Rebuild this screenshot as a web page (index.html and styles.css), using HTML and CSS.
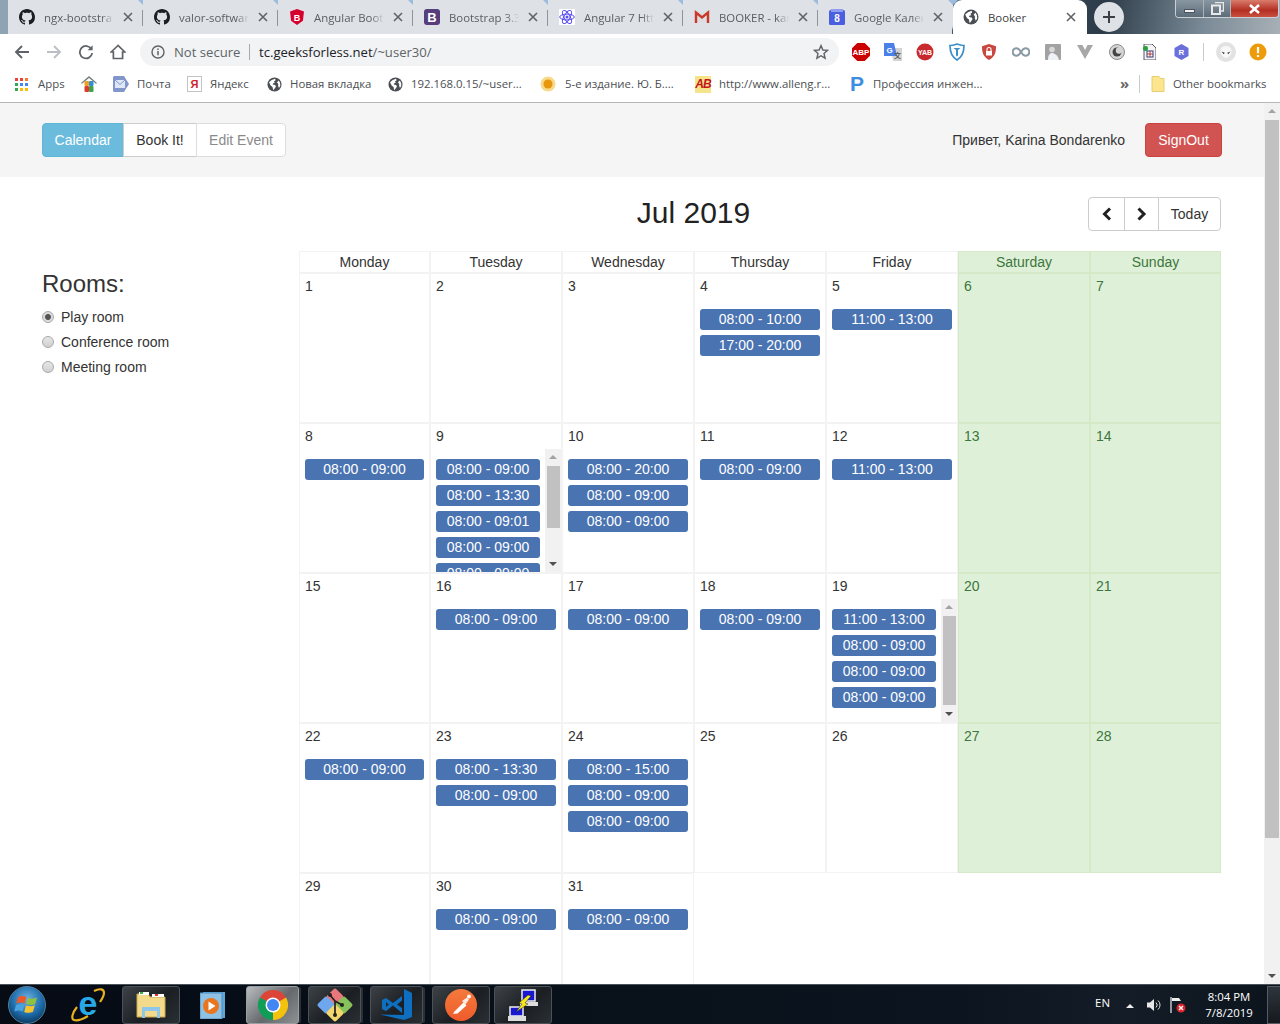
FILE: index.html
```html
<!DOCTYPE html>
<html lang="en">
<head>
<meta charset="utf-8">
<title>Booker</title>
<link rel="stylesheet" href="styles.css">
</head>
<body>
<svg class="defs" width="0" height="0" aria-hidden="true">
  <symbol id="gh" viewBox="0 0 16 16"><path fill="#1b1f23" d="M8 0C3.58 0 0 3.58 0 8c0 3.54 2.29 6.53 5.47 7.59.4.07.55-.17.55-.38 0-.19-.01-.82-.01-1.49-2.01.37-2.53-.49-2.69-.94-.09-.23-.48-.94-.82-1.13-.28-.15-.68-.52-.01-.53.63-.01 1.08.58 1.23.82.72 1.21 1.87.87 2.33.66.07-.52.28-.87.51-1.07-1.78-.2-3.64-.89-3.64-3.95 0-.87.31-1.59.82-2.15-.08-.2-.36-1.02.08-2.12 0 0 .67-.21 2.2.82.64-.18 1.32-.27 2-.27.68 0 1.36.09 2 .27 1.53-1.04 2.2-.82 2.2-.82.44 1.1.16 1.92.08 2.12.51.56.82 1.27.82 2.15 0 3.07-1.87 3.75-3.65 3.95.29.25.54.73.54 1.48 0 1.07-.01 1.93-.01 2.2 0 .21.15.46.55.38A8.013 8.013 0 0016 8c0-4.42-3.58-8-8-8z"/></symbol>
  <symbol id="globe" viewBox="0 0 16 16"><circle cx="8" cy="8" r="7.5" fill="#4b4f54"/><path fill="#fff" d="M2.2 5.5 5 3.2l3.6-1.4.6 1.6-1.8 1.3 1 1.5-1.8.4-.6 1.4 2.6.5 1 1.6-1.6 2.3-1.4 1.6-.7-3.4-2-1.6zM10.6 5.6l2-1.8 1.4 2.6.2 3-1.4 2.4-1-2.6.2-1.8z"/></symbol>
  <symbol id="x" viewBox="0 0 10 10"><path d="M1 1l8 8M9 1l-8 8" stroke="#5f6368" stroke-width="1.6" fill="none"/></symbol>
</svg>

<header class="chrome">
  <div class="tabstrip">
    <div class="tab"><svg class="tab-ico"><use href="#gh"/></svg><span class="tab-text">ngx-bootstra</span><svg class="tab-x"><use href="#x"/></svg></div>
    <div class="tab"><svg class="tab-ico"><use href="#gh"/></svg><span class="tab-text">valor-softwar</span><svg class="tab-x"><use href="#x"/></svg></div>
    <div class="tab"><svg class="tab-ico" viewBox="0 0 16 16"><path fill="#d6002f" d="M8 0l7 2.4-1.1 9.4L8 16l-5.900-4.200L1 2.400z"/><text x="8" y="11.500" text-anchor="middle" class="svg-b9">B</text></svg><span class="tab-text">Angular Boot</span><svg class="tab-x"><use href="#x"/></svg></div>
    <div class="tab"><svg class="tab-ico" viewBox="0 0 16 16"><rect width="16" height="16" rx="3" fill="#563d7c"/><text x="8" y="12.500" text-anchor="middle" class="svg-b12">B</text></svg><span class="tab-text">Bootstrap 3.3</span><svg class="tab-x"><use href="#x"/></svg></div>
    <div class="tab"><svg class="tab-ico" viewBox="0 0 16 16"><rect width="16" height="16" fill="#fff"/><g fill="none" stroke="#5a4ff0" stroke-width="1"><ellipse cx="8" cy="8" rx="7.300" ry="2.900"/><ellipse cx="8" cy="8" rx="7.300" ry="2.900" transform="rotate(60 8 8)"/><ellipse cx="8" cy="8" rx="7.300" ry="2.900" transform="rotate(120 8 8)"/></g><circle cx="8" cy="8" r="1.500" fill="#5a4ff0"/></svg><span class="tab-text">Angular 7 Htt</span><svg class="tab-x"><use href="#x"/></svg></div>
    <div class="tab"><svg class="tab-ico" viewBox="0 0 16 16"><path fill="#d9d9d9" d="M2 3h12v10H2z" opacity=".35"/><path d="M2 14V3.500l6 5 6-5V14" fill="none" stroke="#c9382b" stroke-width="2.400"/></svg><span class="tab-text">BOOKER - kar</span><svg class="tab-x"><use href="#x"/></svg></div>
    <div class="tab tab-before-active"><svg class="tab-ico" viewBox="0 0 16 16"><rect y="1" width="16" height="15" rx="1.500" fill="#4a5ee0"/><rect x="2" width="12" height="3" fill="#8f9cf0"/><text x="8" y="13" text-anchor="middle" class="svg-b10">8</text></svg><span class="tab-text">Google Кален</span><svg class="tab-x"><use href="#x"/></svg></div>
    <div class="tab tab-active"><svg class="tab-ico"><use href="#globe"/></svg><span class="tab-text">Booker</span><svg class="tab-x"><use href="#x"/></svg></div>
    <div class="newtab"><svg width="14" height="14" viewBox="0 0 14 14"><path d="M7 1v12M1 7h12" stroke="#3c4043" stroke-width="2"/></svg></div>
    <div class="winctl">
      <span class="wc wc-min"><i class="wc-dash"></i></span>
      <span class="wc wc-max"><svg width="13" height="13" viewBox="0 0 13 13"><path d="M4 .5h8.500V9H9" fill="none" stroke="#e8e8e8" stroke-width="1.500"/><rect x="1" y="3.500" width="8" height="8.500" fill="none" stroke="#e8e8e8" stroke-width="2"/></svg></span>
      <span class="wc wc-close"><svg width="13" height="10" viewBox="0 0 13 10"><path d="M2 1l9 8M11 1l-9 8" stroke="#fff" stroke-width="2.600"/></svg></span>
    </div>
  </div>

  <div class="toolbar">
    <span class="tb"><svg width="16" height="16" viewBox="0 0 16 16"><path d="M15 8H2M8 2L2 8l6 6" fill="none" stroke="#5f6368" stroke-width="1.900"/></svg></span>
    <span class="tb"><svg width="16" height="16" viewBox="0 0 16 16"><path d="M1 8h13M8 2l6 6-6 6" fill="none" stroke="#bcc0c4" stroke-width="1.900"/></svg></span>
    <span class="tb"><svg width="16" height="16" viewBox="0 0 16 16"><path d="M13.500 5.200A6.200 6.200 0 1 0 14.200 9" fill="none" stroke="#5f6368" stroke-width="1.800"/><path d="M14.600 1.200v5h-5z" fill="#5f6368"/></svg></span>
    <span class="tb"><svg width="16" height="16" viewBox="0 0 16 16"><path d="M8 1.500L1.200 8H3.400v6.500h9.200V8h2.200z" fill="none" stroke="#5f6368" stroke-width="1.700"/></svg></span>
    <div class="omnibox">
      <svg class="omni-info" width="14" height="14" viewBox="0 0 14 14"><circle cx="7" cy="7" r="6" fill="none" stroke="#5f6368" stroke-width="1.400"/><path d="M7 6v4.200M7 3.400v1.600" stroke="#5f6368" stroke-width="1.500"/></svg>
      <span class="omni-ns">Not secure</span>
      <span class="omni-host">tc.geeksforless.net</span><span class="omni-path">/~user30/</span>
      <svg class="omni-star" width="16" height="16" viewBox="0 0 16 16"><path d="M8 1.600l1.900 4.400 4.700.4-3.600 3.100 1.100 4.700L8 11.700l-4.100 2.500L5 9.500 1.400 6.400l4.700-.4z" fill="none" stroke="#5f6368" stroke-width="1.400"/></svg>
    </div>
    <div class="exts">
      <span class="ext"><svg width="18" height="18" viewBox="0 0 18 18"><path fill="#c00" d="M5.300 0h7.400L18 5.300v7.400L12.700 18H5.300L0 12.700V5.300z"/><text x="9" y="12" text-anchor="middle" class="svg-b8n">ABP</text></svg></span>
      <span class="ext"><svg width="18" height="18" viewBox="0 0 18 18"><path fill="#d4d4d4" d="M7 5h11v13H9z"/><path fill="#4a80e8" d="M0 0h10l3 13H0z"/><text x="5.500" y="10" text-anchor="middle" class="svg-b8">G</text><text x="13.500" y="15" text-anchor="middle" class="svg-g7">文</text></svg></span>
      <span class="ext"><svg width="18" height="18" viewBox="0 0 18 18"><circle cx="9" cy="9" r="8.500" fill="#c9282d"/><text x="9" y="11.500" text-anchor="middle" class="svg-b7">YAB</text></svg></span>
      <span class="ext"><svg width="16" height="18" viewBox="0 0 16 18"><path d="M1 2.500c4 0 5-1 7-1.500 2 .5 3 1.500 7 1.500 0 6-1 11-7 14.500C2 13.500 1 8.500 1 2.500z" fill="#fff" stroke="#3d8fcb" stroke-width="1.700"/><path d="M4.500 5h7l-2.500 2v5.500l-1 1-1-1V7z" fill="#3d8fcb"/></svg></span>
      <span class="ext"><svg width="14" height="16" viewBox="0 0 14 16"><path d="M7 0l7 2.200c0 6-1 10.500-7 13.800C1 12.700 0 8.200 0 2.200z" fill="#c9473f"/><rect x="4" y="7" width="6" height="4.500" fill="#fff"/><path d="M5 7V5.500a2 2 0 0 1 4 0V7" fill="none" stroke="#fff" stroke-width="1.100"/></svg></span>
      <span class="ext"><svg width="18" height="10" viewBox="0 0 18 10"><path d="M9 5C7.500 2.500 6 1.200 4.500 1.200a3.800 3.800 0 0 0 0 7.600C6 8.800 7.500 7.500 9 5c1.500-2.500 3-3.800 4.500-3.800a3.800 3.800 0 0 1 0 7.600C12 8.800 10.500 7.500 9 5z" fill="none" stroke="#8a9aa5" stroke-width="2"/></svg></span>
      <span class="ext"><svg width="16" height="16" viewBox="0 0 16 16"><rect width="16" height="16" rx="1" fill="#a2a2a2"/><circle cx="7" cy="5.500" r="2.800" fill="#d8d8d8"/><path d="M3 16c0-5 2-7 4-7s6 2 7 7z" fill="#eef1f6"/></svg></span>
      <span class="ext"><svg width="16" height="14" viewBox="0 0 16 14"><path d="M0 0h5.500L8 5l2.500-5H16L8 14z" fill="#a7a7a7"/></svg></span>
      <span class="ext"><svg width="16" height="16" viewBox="0 0 16 16"><circle cx="8" cy="8" r="7.500" fill="#d5d5d5" stroke="#8a8a8a"/><circle cx="8" cy="8" r="4.500" fill="#444"/><circle cx="10" cy="6.500" r="3.200" fill="#d5d5d5"/></svg></span>
      <span class="ext"><svg width="14" height="16" viewBox="0 0 14 16"><path d="M2 0h8l4 4v12H2z" fill="#f4f4f4" stroke="#556" stroke-width="1"/><rect x="5" y="7" width="6" height="6" fill="#fff" stroke="#2b3f7a"/><path d="M8 7v6M5 10h6" stroke="#b33"/><rect x="1" y="2" width="5" height="5" rx="2" fill="#2ea043"/></svg></span>
      <span class="ext"><svg width="15" height="16" viewBox="0 0 15 16"><path d="M7.500 0l7 4v8l-7 4-7-4V4z" fill="#6a6fdc"/><text x="7.500" y="11" text-anchor="middle" class="svg-b8">R</text></svg></span>
    </div>
    <span class="tb-sep"></span>
    <span class="ext"><svg width="20" height="20" viewBox="0 0 20 20"><circle cx="10" cy="10" r="10" fill="#e2e2e2"/><path d="M10 4c4 0 5.500 3 5.500 5 0 4-3.500 7-5.500 7s-5.500-3-5.500-7c0-2 1.500-5 5.500-5z" fill="#f8f8f8"/><path d="M5.500 9.500l3.200 1.300-.9 1.500zM14.500 9.500l-3.200 1.300.9 1.500z" fill="#333"/></svg></span>
    <span class="ext"><svg width="18" height="18" viewBox="0 0 18 18"><circle cx="9" cy="9" r="8.500" fill="#ee9b0b"/><path d="M9 4v6.200M9 12v2" stroke="#fff" stroke-width="2.200"/></svg></span>
  </div>

  <nav class="bookmarks">
    <a class="bm"><svg width="13" height="13" viewBox="0 0 13 13"><rect width="3" height="3" fill="#ea4335"/><rect x="5" width="3" height="3" fill="#ea4335"/><rect x="10" width="3" height="3" fill="#f4792b"/><rect y="5" width="3" height="3" fill="#34a853"/><rect x="5" y="5" width="3" height="3" fill="#4285f4"/><rect x="10" y="5" width="3" height="3" fill="#4285f4"/><rect y="10" width="3" height="3" fill="#34a853"/><rect x="5" y="10" width="3" height="3" fill="#fbbc05"/><rect x="10" y="10" width="3" height="3" fill="#fbbc05"/></svg><span class="bm-apps">Apps</span></a>
    <a class="bm"><svg width="16" height="16" viewBox="0 0 16 16"><path d="M8 0L0 7l1 .8L8 2l7 5.800L16 7z" fill="#77807a"/><rect x="3.500" y="5" width="4.500" height="5" rx="1" fill="#f0a020"/><rect x="8" y="5" width="4.500" height="5" rx="1" fill="#2f8fd1"/><rect x="3.500" y="10" width="4.500" height="6" rx="1" fill="#e0392b"/><rect x="8" y="10" width="4.500" height="6" rx="1" fill="#3fa34d"/></svg></a>
    <a class="bm"><svg width="16" height="16" viewBox="0 0 16 16"><path d="M1.500 0H11l5 8-5 8H1.500A1.500 1.500 0 0 1 0 14.500v-13A1.500 1.500 0 0 1 1.500 0z" fill="#8296cc"/><rect x="2" y="4" width="10" height="8" fill="#dfe7f6"/><path d="M2 4l5 4.500L12 4" fill="none" stroke="#8296cc"/></svg><span class="bm-t">Почта</span></a>
    <a class="bm"><span class="ico-ya">Я</span><span class="bm-t">Яндекс</span></a>
    <a class="bm"><svg width="15" height="15"><use href="#globe"/></svg><span class="bm-t bm-g">Новая вкладка</span></a>
    <a class="bm"><svg width="15" height="15"><use href="#globe"/></svg><span class="bm-t">192.168.0.15/~user...</span></a>
    <a class="bm"><svg width="16" height="16" viewBox="0 0 16 16"><circle cx="8" cy="8" r="7.500" fill="#f7d98a"/><circle cx="8" cy="8" r="4.500" fill="#e7960e"/></svg><span class="bm-t bm-s">5-е издание. Ю. Б....</span></a>
    <a class="bm"><span class="ico-ab">AB</span><span class="bm-t">http://www.alleng.r...</span></a>
    <a class="bm"><span class="ico-p">P</span><span class="bm-t">Профессия инжен...</span></a>
    <span class="bm-more">»</span>
    <span class="bm-sep"></span>
    <a class="bm"><svg width="14" height="16" viewBox="0 0 14 16"><path d="M1 .5h7l1.500 2H13v13H1z" fill="#fbe58f" stroke="#e7cf6f"/></svg><span class="bm-t">Other bookmarks</span></a>
  </nav>
</header>

<div class="viewport">
  <main class="page">
    <section class="topbar">
      <div class="btn-group">
        <button class="btn btn-info">Calendar</button>
        <button class="btn btn-book">Book It!</button>
        <button class="btn btn-disabled">Edit Event</button>
      </div>
      <div class="user">
        <span>Привет, Karina Bondarenko</span>
        <button class="btn btn-danger">SignOut</button>
      </div>
    </section>

    <section class="content">
      <aside class="rooms">
        <h2 class="rooms-title">Rooms:</h2>
        <label class="room"><span class="radio radio-on"></span>Play room</label>
        <label class="room"><span class="radio"></span>Conference room</label>
        <label class="room"><span class="radio"></span>Meeting room</label>
      </aside>

      <div class="calendar">
        <div class="cal-head">
          <h1 class="cal-title">Jul 2019</h1>
          <div class="btn-group">
            <button class="btn btn-nav"><svg width="12" height="14" viewBox="0 0 12 14"><path d="M9 1.500L3.500 7 9 12.500" fill="none" stroke="#222" stroke-width="3"/></svg></button>
            <button class="btn btn-nav"><svg width="12" height="14" viewBox="0 0 12 14"><path d="M2.500 1.500L8 7l-5.500 5.500" fill="none" stroke="#222" stroke-width="3"/></svg></button>
            <button class="btn btn-today">Today</button>
          </div>
        </div>

        <div class="grid">
          <div class="dow">Monday</div><div class="dow">Tuesday</div><div class="dow">Wednesday</div><div class="dow">Thursday</div><div class="dow">Friday</div><div class="dow we">Saturday</div><div class="dow we">Sunday</div>

          <div class="day"><div class="num">1</div></div>
          <div class="day"><div class="num">2</div></div>
          <div class="day"><div class="num">3</div></div>
          <div class="day"><div class="num">4</div><div class="events"><div class="ev-list"><div class="ev">08:00 - 10:00</div><div class="ev">17:00 - 20:00</div></div></div></div>
          <div class="day"><div class="num">5</div><div class="events"><div class="ev-list"><div class="ev">11:00 - 13:00</div></div></div></div>
          <div class="day we"><div class="num">6</div></div>
          <div class="day we"><div class="num">7</div></div>

          <div class="day"><div class="num">8</div><div class="events"><div class="ev-list"><div class="ev">08:00 - 09:00</div></div></div></div>
          <div class="day"><div class="num">9</div><div class="events"><div class="ev-list ev-scroll"><div class="ev">08:00 - 09:00</div><div class="ev">08:00 - 13:30</div><div class="ev">08:00 - 09:01</div><div class="ev">08:00 - 09:00</div><div class="ev">08:00 - 09:00</div></div><div class="sb"><i class="sb-up"></i><b class="sb-thumb sb-t1"></b><i class="sb-down"></i></div></div></div>
          <div class="day"><div class="num">10</div><div class="events"><div class="ev-list"><div class="ev">08:00 - 20:00</div><div class="ev">08:00 - 09:00</div><div class="ev">08:00 - 09:00</div></div></div></div>
          <div class="day"><div class="num">11</div><div class="events"><div class="ev-list"><div class="ev">08:00 - 09:00</div></div></div></div>
          <div class="day"><div class="num">12</div><div class="events"><div class="ev-list"><div class="ev">11:00 - 13:00</div></div></div></div>
          <div class="day we"><div class="num">13</div></div>
          <div class="day we"><div class="num">14</div></div>

          <div class="day"><div class="num">15</div></div>
          <div class="day"><div class="num">16</div><div class="events"><div class="ev-list"><div class="ev">08:00 - 09:00</div></div></div></div>
          <div class="day"><div class="num">17</div><div class="events"><div class="ev-list"><div class="ev">08:00 - 09:00</div></div></div></div>
          <div class="day"><div class="num">18</div><div class="events"><div class="ev-list"><div class="ev">08:00 - 09:00</div></div></div></div>
          <div class="day"><div class="num">19</div><div class="events"><div class="ev-list ev-scroll"><div class="ev">11:00 - 13:00</div><div class="ev">08:00 - 09:00</div><div class="ev">08:00 - 09:00</div><div class="ev">08:00 - 09:00</div></div><div class="sb"><i class="sb-up"></i><b class="sb-thumb sb-t2"></b><i class="sb-down"></i></div></div></div>
          <div class="day we"><div class="num">20</div></div>
          <div class="day we"><div class="num">21</div></div>

          <div class="day"><div class="num">22</div><div class="events"><div class="ev-list"><div class="ev">08:00 - 09:00</div></div></div></div>
          <div class="day"><div class="num">23</div><div class="events"><div class="ev-list"><div class="ev">08:00 - 13:30</div><div class="ev">08:00 - 09:00</div></div></div></div>
          <div class="day"><div class="num">24</div><div class="events"><div class="ev-list"><div class="ev">08:00 - 15:00</div><div class="ev">08:00 - 09:00</div><div class="ev">08:00 - 09:00</div></div></div></div>
          <div class="day"><div class="num">25</div></div>
          <div class="day"><div class="num">26</div></div>
          <div class="day we"><div class="num">27</div></div>
          <div class="day we"><div class="num">28</div></div>

          <div class="day"><div class="num">29</div></div>
          <div class="day"><div class="num">30</div><div class="events"><div class="ev-list"><div class="ev">08:00 - 09:00</div></div></div></div>
          <div class="day"><div class="num">31</div><div class="events"><div class="ev-list"><div class="ev">08:00 - 09:00</div></div></div></div>
        </div>
      </div>
    </section>
  </main>
  <div class="page-sb"><i class="sb-up"></i><b class="page-thumb"></b><i class="sb-down"></i></div>
</div>

<footer class="taskbar">
  <span class="orb"><svg width="46" height="38" viewBox="0 1 46 38"><defs><radialGradient id="orbg" cx=".5" cy=".35" r=".7"><stop offset="0" stop-color="#6fb4e4"/><stop offset=".6" stop-color="#1c6aa8"/><stop offset="1" stop-color="#0a2f50"/></radialGradient></defs><circle cx="23" cy="20" r="18.500" fill="url(#orbg)" stroke="#4f7f9f"/><path d="M14 12c3-1.500 6-1 8.500.2l-1.800 6.300c-2.500-1-5-1.500-8.500 0z" fill="#e8592b"/><path d="M24 12.800c3 1.200 6 1.200 9-.2l-1.800 6.300c-3 1.400-6 1.200-9 .2z" fill="#8fc23f"/><path d="M12 20c3-1.500 6-1 8.300 0L18.600 26.500c-2.500-1-5-1.500-8.400 0z" fill="#4aa3df"/><path d="M22 20.500c3 1 6 1 8.800-.2L29 26.800c-3 1.400-6 1.200-8.800.1z" fill="#f4c430"/></svg></span>
  <span class="tk tk-plain tk-ie"><svg width="38" height="38" viewBox="0 0 38 38"><path d="M25 5c6-3 10-2 10 2 0 3-2 6-4 9M8 21C3 27 2 33 5 34c3 1 9-1 14-4" fill="none" stroke="#e8b020" stroke-width="2.200"/><text x="19" y="29" text-anchor="middle" class="svg-ie">e</text></svg></span>
  <span class="tk tk-btn tk-folder"><svg width="32" height="32" viewBox="0 0 32 32"><path d="M2 5h11l2 3h15v20H2z" fill="#f3d98a" stroke="#c9a94f"/><rect x="4" y="3" width="10" height="3" fill="#fff"/><rect x="5" y="3" width="3" height="2" fill="#3cb043"/><rect x="17" y="5" width="12" height="3" fill="#fff"/><rect x="20" y="5" width="3" height="2" fill="#d33"/><path d="M7 18h18v11h-3v-7H10v7H7z" fill="#8fc7ea"/></svg></span>
  <span class="tk tk-plain tk-media"><svg width="26" height="28" viewBox="0 0 26 28"><rect x="3" y="1" width="22" height="26" fill="#5fa7d9"/><rect y="2" width="22" height="26" fill="#8ec1e4" stroke="#4e8fc0"/><circle cx="11" cy="15" r="8" fill="#e9761e"/><path d="M8.500 10.500v9l7-4.500z" fill="#fff"/></svg></span>
  <span class="tk tk-btn tk-active"><svg width="30" height="30" viewBox="0 0 30 30"><path d="M2 7.500A15 15 0 0 1 28 7.500L15 15z" fill="#db4437"/><path d="M28 7.500A15 15 0 0 1 15 30V15z" fill="#f4c20d"/><path d="M15 30A15 15 0 0 1 2 7.500L15 15z" fill="#0f9d58"/><circle cx="15" cy="15" r="7.500" fill="#fff"/><circle cx="15" cy="15" r="6" fill="#4285f4"/></svg></span>
  <span class="tk tk-btn tk-git"><svg width="36" height="36" viewBox="0 0 36 36"><rect x="11.500" y="3.500" width="13" height="13" rx="2" transform="rotate(45 18 10)" fill="#e8787c"/><rect x="2.500" y="11.500" width="13" height="13" rx="2" transform="rotate(45 9 18)" fill="#6ea7ee"/><rect x="20.500" y="11.500" width="13" height="13" rx="2" transform="rotate(45 27 18)" fill="#86c15a"/><rect x="11.500" y="19.500" width="13" height="13" rx="2" transform="rotate(45 18 26)" fill="#f3d66c"/><path d="M12 7l6 7v14M18 14l7 4" stroke="#222" stroke-width="1.700" fill="none"/><circle cx="18" cy="28" r="2" fill="#222"/><circle cx="13" cy="8" r="2" fill="#222"/><circle cx="25" cy="18" r="2" fill="#222"/></svg></span>
  <span class="tk tk-btn"><svg width="33" height="32" viewBox="0 0 33 32"><path d="M24 0l8 4v24l-8 3L0 25.500l24 .5z" fill="#0e6fc0"/><path fill-rule="evenodd" d="M22 7l-9 7-7-5-4 2v9l4 2 7-5.500 9 7.500v-5l-5-3.500 5-4zM6 13l3 2.500L6 18z" fill="#0e6fc0"/></svg></span>
  <span class="tk tk-btn tk-postman"><svg width="32" height="32" viewBox="0 0 32 32"><defs><linearGradient id="pm" x1="0" y1="0" x2="0" y2="1"><stop offset="0" stop-color="#f47a3c"/><stop offset="1" stop-color="#ef5b2b"/></linearGradient></defs><circle cx="16" cy="16" r="16" fill="url(#pm)"/><path d="M8 25l1.500-2.500 9-9 3 3-9 8z" fill="#fff"/><path d="M17 12l5-3.500 2 2-3.500 5z" fill="#fff" opacity=".85"/><circle cx="24" cy="7.500" r="2" fill="#fff"/></svg></span>
  <span class="tk tk-btn tk-net"><svg width="32" height="32" viewBox="0 0 32 32"><rect x="15" y="1" width="13" height="11" fill="#1818d0" stroke="#eee" stroke-width="1.500"/><rect x="13" y="13" width="18" height="4" fill="#ddd"/><rect x="3" y="18" width="13" height="9" fill="#1818d0" stroke="#eee" stroke-width="1.500"/><rect x="1" y="27" width="18" height="5" fill="#ddd"/><path d="M21 6l-9 8 3 1-6 8 12-8-3-1 6-7z" fill="#f6e71a" stroke="#222" stroke-width=".5"/></svg></span>
  <div class="tray">
    <span class="tray-en">EN</span>
    <span class="tray-arrow"></span>
    <svg class="tray-ico" width="16" height="16" viewBox="0 0 16 16"><path d="M1 5.500h3L8 2v12l-4-3.500H1z" fill="#e8e8e8"/><path d="M10 5.500a3.500 3.500 0 0 1 0 5M12 3.500a6 6 0 0 1 0 9" fill="none" stroke="#d8d8d8" stroke-width="1"/></svg>
    <svg class="tray-ico tray-flag" width="16" height="16" viewBox="0 0 16 16"><path d="M1 0v16" stroke="#eee" stroke-width="1.200"/><path d="M2 1h7l2 3H2z" fill="#eee"/><circle cx="11" cy="11" r="4.500" fill="#d8232a"/><path d="M9 9l4 4M13 9l-4 4" stroke="#fff" stroke-width="1.300"/></svg>
    <div class="clock"><span>8:04 PM</span><span>7/8/2019</span></div>
    <span class="show-desktop"></span>
  </div>
</footer>
</body>
</html>
```

FILE: styles.css
```css
* { box-sizing: border-box; }
html, body { margin: 0; padding: 0; }
body {
  width: 1280px;
  height: 1024px;
  overflow: hidden;
  display: flex;
  flex-direction: column;
  font-family: "Liberation Sans", Arial, sans-serif;
  font-size: 14px;
  color: #333;
  background: #fff;
}
.defs { position: absolute; }

/* browser chrome */
.chrome {
  flex: none;
  height: 103px;
  border-bottom: 1px solid #b4b6b8;
  font-family: "Open Sans", "Noto Sans", sans-serif;
  font-size: 11.4px;
  color: #5a5e63;
}
.tabstrip {
  height: 34px;
  display: flex;
  padding-left: 8px;
  background: linear-gradient(90deg, #8ea3b4 0, #8ea3b4 9px, #dee1e6 9px, #dee1e6 952px, transparent 952px),
    linear-gradient(100deg, #44596d 75%, #2d3b49 86%, #7b8b97 94%, #a8b0b6 100%);
}
.tab {
  position: relative;
  width: 135px;
  height: 34px;
  flex: none;
  display: flex;
  align-items: center;
  padding-left: 11px;
  background: #dee1e6;
  font-size: 11.4px;
}
.tab::after {
  content: "";
  position: absolute;
  right: 0;
  top: 10px;
  width: 1px;
  height: 16px;
  background: #8f9296;
}
.tab::before {
  content: "";
  position: absolute;
  right: -5px;
  top: 0;
  border: 5px solid transparent;
  border-top-color: #9bbcdc;
  border-bottom: 0;
}
.tab-before-active { border-bottom-right-radius: 8px; }
.tab-before-active::after { display: none; }
.tab-ico { width: 16px; height: 16px; flex: none; }
.svg-b8 { font: 700 8px "Liberation Sans", sans-serif; fill: #fff; }
.svg-b9 { font: 700 9px "Liberation Sans", sans-serif; fill: #fff; }
.svg-b8n { font: 700 8px "Liberation Sans Narrow", "Liberation Sans", sans-serif; fill: #fff; }
.svg-b7 { font: 700 7px "Liberation Sans", sans-serif; fill: #fff; }
.svg-b10 { font: 700 10px "Liberation Sans", sans-serif; fill: #fff; }
.svg-b12 { font: 700 13px "Liberation Sans", sans-serif; fill: #fff; }
.svg-g7 { font: 700 7px "Noto Sans CJK SC", sans-serif; fill: #555; }
.svg-ie { font: 700 34px "Liberation Sans", sans-serif; fill: #27a9e8; }
.tab-text {
  margin-left: 9px;
  width: 70px;
  white-space: nowrap;
  flex: none;
  -webkit-mask-image: linear-gradient(90deg, #000 82%, transparent 100%);
  mask-image: linear-gradient(90deg, #000 82%, transparent 100%);
}
.tab-x { width: 10px; height: 10px; margin-left: 9px; flex: none; }
.tab-active {
  width: 134px;
  background: #fff;
  border-radius: 9px 9px 0 0;
  padding-left: 10px;
  color: #3c4043;
}
.tab-active::after, .tab-active::before { display: none; }
.tab-active .tab-text { width: 69px; -webkit-mask-image: none; mask-image: none; margin-left: 9px; }
.newtab {
  width: 30px;
  height: 30px;
  margin: 2px 0 0 7px;
  border-radius: 50%;
  background: #dee1e6;
  display: flex;
  align-items: center;
  justify-content: center;
  flex: none;
}
.winctl {
  margin-left: auto;
  margin-right: 1px;
  width: 104px;
  height: 18px;
  display: flex;
  border: 1px solid #c8d0d6;
  border-top: 0;
  border-radius: 0 0 4px 4px;
  overflow: hidden;
  flex: none;
}
.wc {
  display: flex;
  align-items: center;
  justify-content: center;
  border-right: 1px solid #aab2b8;
}
.wc-min { width: 28px; background: linear-gradient(#8997a3, #5d6c79); }
.wc-max { width: 27px; background: linear-gradient(#8997a3, #5d6c79); }
.wc-close { flex: 1; border-right: 0; background: linear-gradient(#d97c6c, #b32f22 60%, #c9503f); }
.wc-dash { width: 11px; height: 4px; margin-top: 4px; background: #f0f0f0; border: 1px solid #4a5560; }

.toolbar {
  height: 34px;
  margin-top: 1px;
  display: flex;
  align-items: center;
  padding-left: 6px;
  background: #fff;
}
.tb, .ext {
  width: 32px;
  height: 32px;
  flex: none;
  display: flex;
  align-items: center;
  justify-content: center;
}
.omnibox {
  width: 699px;
  height: 28px;
  margin: 0 6px;
  border-radius: 14px;
  background: #f1f3f4;
  display: flex;
  align-items: center;
  padding-left: 11px;
  font-size: 13.1px;
  flex: none;
}
.omni-info { flex: none; }
.omni-ns {
  margin-left: 9px;
  width: 76px;
  height: 16px;
  line-height: 16px;
  border-right: 1px solid #a7a9ac;
  color: #5f6368;
  flex: none;
}
.omni-host { margin-left: 9px; color: #202124; }
.omni-path { color: #5f6368; }
.omni-star { margin-left: auto; margin-right: 10px; flex: none; }
.exts { display: flex; flex: none; }
.tb-sep { width: 1px; height: 18px; margin: 0 6px; background: #c8cacc; flex: none; }

.bookmarks {
  height: 30px;
  display: grid;
  grid-template-columns: 66px 32px 74px 80px 121px 152px 155px 155px 270px 19px 12px auto;
  align-items: center;
  padding-left: 15px;
  background: #fff;
  color: #4c5054;
}
.bm { display: flex; align-items: center; gap: 8px; white-space: nowrap; }
.bm-t { padding-bottom: 2px; }
.bm-apps { margin-left: 2px; padding-bottom: 2px; }
.bm-g { margin-left: 0; }
.bm-s { margin-left: 1px; }
.ico-ya {
  width: 15px;
  height: 16px;
  border: 1px solid #c4c4c4;
  color: #d2232a;
  background: #fff;
  font: 700 11px/14px "Liberation Sans", sans-serif;
  text-align: center;
  flex: none;
}
.ico-ab {
  width: 16px;
  height: 17px;
  background: #f6e48a;
  color: #c4161c;
  font: italic 700 12px/17px "Liberation Sans", sans-serif;
  letter-spacing: -1px;
  text-align: center;
  flex: none;
}
.ico-p {
  width: 15px;
  color: #3d8ee0;
  font: 700 21px/16px "Liberation Sans", sans-serif;
  flex: none;
}
.bm-more { font-size: 15px; font-weight: 700; color: #666; padding-bottom: 2px; }
.bm-sep { width: 1px; height: 18px; background: #c8cacc; }

/* page */
.viewport {
  flex: 1;
  min-height: 0;
  display: flex;
  overflow: hidden;
}
.page {
  width: 1264px;
  flex: none;
  overflow: hidden;
  background: #fff;
}
.topbar {
  height: 74px;
  padding: 20px 42px;
  background: #f5f5f5;
  display: flex;
  justify-content: space-between;
  align-items: center;
}
.btn-group { display: flex; flex: none; }
.btn {
  height: 34px;
  padding: 0;
  margin-left: -1px;
  background: #fff;
  border: 1px solid #ccc;
  font: 14px "Liberation Sans", Arial, sans-serif;
  color: #333;
  display: flex;
  align-items: center;
  justify-content: center;
}
.btn-group .btn:first-child { margin-left: 0; border-radius: 4px 0 0 4px; }
.btn-group .btn:last-child { border-radius: 0 4px 4px 0; }
.btn-info { width: 82px; background: #6bbcdc; border-color: #5fb5d6; color: #fff; }
.btn-book { width: 74px; }
.btn-disabled { width: 90px; color: #8a8a8a; border-color: #ddd; }
.btn-danger { width: 77px; margin: 0; background: #d25452; border-color: #c9423e; color: #fff; border-radius: 4px; }
.user { display: flex; align-items: center; gap: 20px; }
.btn-nav { width: 35px; }
.btn-group .btn-nav:first-child { width: 37px; }
.btn-today { width: 63px; }

.content { display: flex; padding: 20px 43px 0 42px; }
.rooms { width: 257px; flex: none; padding-top: 74px; }
.rooms-title { margin: 0 0 7px; font-size: 24px; font-weight: 400; line-height: 26px; }
.room { display: flex; align-items: center; height: 25px; gap: 7px; color: #333; }
.radio {
  width: 12px;
  height: 12px;
  border-radius: 50%;
  border: 1px solid #a9a9a9;
  background: linear-gradient(#e6e6e6, #d0d0d0);
  flex: none;
}
.radio-on { background: radial-gradient(circle, #555 0 2.5px, #dcdcdc 3.5px); }

.calendar { width: 922px; flex: none; }
.cal-head { display: flex; align-items: center; height: 34px; margin-bottom: 20px; }
.cal-title {
  flex: 1;
  margin: 0;
  padding-bottom: 2px;
  text-align: center;
  font-size: 30px;
  font-weight: 400;
  line-height: 32px;
  color: #222;
}
.grid {
  display: grid;
  grid-template-columns: 131px 132px 132px 132px 132px 132px 131px;
  grid-template-rows: 22px;
  grid-auto-rows: 150px;
}
.dow {
  border: 1px solid #f3f3f3;
  text-align: center;
  line-height: 20px;
}
.day {
  border: 1px solid #f3f3f3;
  padding-top: 3px;
  display: flex;
  flex-direction: column;
  min-height: 0;
  overflow: hidden;
}
.we { background: #dff0d8; border-color: #d6e9c6; color: #3c763d; }
.num { height: 22px; line-height: 18px; padding-left: 5px; flex: none; }
.events { flex: 1; min-height: 0; display: flex; }
.ev-list { flex: 1; min-width: 0; padding: 10px 5px 0 5px; overflow: hidden; }
.ev {
  height: 21px;
  margin-bottom: 5px;
  border-radius: 3px;
  background: #4a73b2;
  color: #fff;
  line-height: 21px;
  text-align: center;
}

/* scrollbars */
.sb {
  width: 16px;
  flex: none;
  background: #f1f1f1;
  display: flex;
  flex-direction: column;
  align-items: center;
}
.sb-up, .sb-down {
  display: block;
  width: 0;
  height: 0;
  border-left: 4px solid transparent;
  border-right: 4px solid transparent;
  flex: none;
}
.sb-up { border-bottom: 4px solid #a3a3a3; margin-top: 6px; }
.sb-down { border-top: 4px solid #505050; margin-top: auto; margin-bottom: 6px; }
.sb-thumb { width: 13px; background: #c1c1c1; flex: none; }
.sb-t1 { height: 62px; margin-top: 7px; }
.sb-t2 { height: 89px; margin-top: 7px; }
.page-sb {
  width: 16px;
  flex: none;
  background: #f1f1f1;
  display: flex;
  flex-direction: column;
  align-items: center;
}
.page-thumb { width: 14px; height: 718px; margin-top: 7px; background: #c1c1c1; flex: none; }

/* taskbar */
.taskbar {
  flex: none;
  height: 40px;
  display: flex;
  align-items: center;
  border-top: 1px solid #4a525a;
  background: linear-gradient(90deg, #060b14 0, #08101a 45%, #0c151f 75%, #141d27 88%, #0b131c 100%);
  color: #fff;
  font-family: "Open Sans", "Noto Sans", sans-serif;
  font-size: 11.4px;
}
.orb { width: 54px; padding-left: 4px; flex: none; display: flex; }
.tk {
  height: 38px;
  flex: none;
  display: flex;
  align-items: center;
  justify-content: center;
}
.tk-btn {
  width: 53px;
  margin-right: 9px;
  border: 1px solid #4b5157;
  border-radius: 3px;
  background: linear-gradient(135deg, #3d4247, #1b1f24 55%, #2a2f34);
  box-shadow: 3px 0 0 -1px #2b3035;
}
.tk-ie { width: 68px; }
.tk-folder { width: 58px; margin-right: 0; box-shadow: none; }
.tk-media { width: 66px; }
.tk-active { border-color: #9b9ea1; background: linear-gradient(135deg, #b9bcbf, #66696c 55%, #8e9194); }
.tk-postman { width: 58px; margin-right: 4px; box-shadow: none; }
.tk-net { width: 58px; box-shadow: none; margin-right: 0; }
.tray { margin-left: auto; display: flex; align-items: center; height: 38px; }
.tray-en { margin-right: 16px; margin-top: -4px; }
.tray-arrow {
  width: 0;
  height: 0;
  border-left: 4px solid transparent;
  border-right: 4px solid transparent;
  border-bottom: 4px solid #eee;
  margin-right: 12px;
  margin-top: 2px;
}
.tray-ico { margin-right: 8px; flex: none; }
.tray-flag { margin-right: 11px; }
.clock {
  width: 64px;
  margin-right: 6px;
  display: flex;
  flex-direction: column;
  align-items: center;
  line-height: 16px;
}
.show-desktop {
  width: 13px;
  height: 38px;
  border: 1px solid #555c63;
  border-right: 0;
  background: linear-gradient(#2e353c, #15191e);
  flex: none;
}
```
